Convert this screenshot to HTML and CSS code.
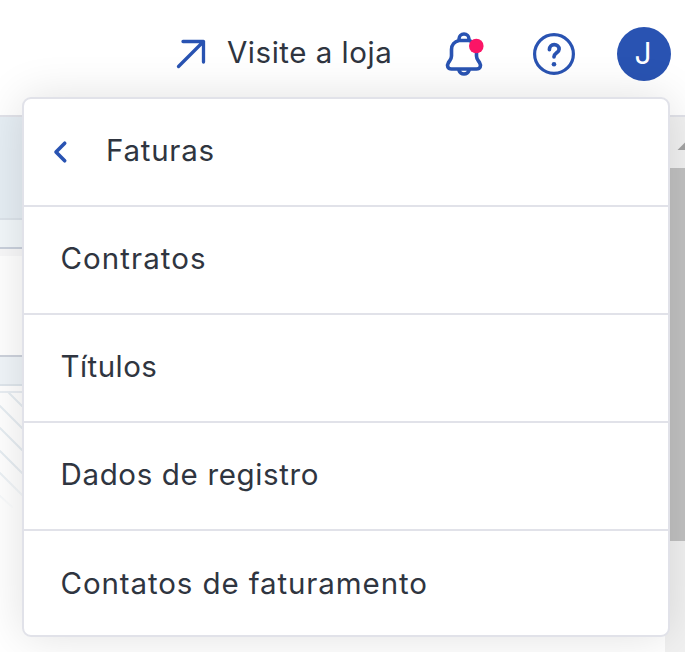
FILE: index.html
```html
<!DOCTYPE html>
<html lang="pt-BR">
<head>
<meta charset="utf-8">
<title>Faturas</title>
<link rel="stylesheet" href="styles.css">
</head>
<body>
<header class="topbar">
  <a class="store">
    <svg class="arrow" width="32" height="32" viewBox="0 0 32 32"><path d="M3.500 28.500 28.500 3.500M8 3.500h20.500v20.500"/></svg>
    <span class="store-label">Visite a loja</span>
  </a>
  <svg class="bell" width="40" height="46" viewBox="0 0 40 46">
    <path d="M15 8V7a5 5 0 0 1 10 0v1M15 38.500a5.300 5.300 0 0 0 10 0M15 8.500h10c4.500 1 7.500 4.500 7.500 9v6.500c0 3 1.500 4.200 3 6.500 2 3.400.8 6.500-3 6.500H7.500c-3.800 0-5-3.100-3-6.500 1.500-2.300 3-3.500 3-6.500v-6.500c0-4.500 3-8 7.500-9z"/>
    <circle class="dot" cx="32.300" cy="14" r="7.300"/>
  </svg>
  <svg class="help" width="42" height="42" viewBox="0 0 42 42">
    <circle cx="21" cy="21" r="19.400"/>
    <path class="mark" d="M16.400 16.600c0-3 2.100-4.900 4.800-4.900s4.900 1.900 4.900 4.500c0 3.600-5.100 3.600-5.100 7.600"/>
    <circle class="point" cx="21" cy="31.300" r="2.300"/>
  </svg>
  <div class="avatar">J</div>
</header>
<main class="page">
  <div class="content">
    <div class="band band-top"></div>
    <div class="band band-sub"></div>
    <div class="band band-gap"></div>
    <div class="band band-blank"></div>
    <div class="band band-foot"></div>
    <div class="band band-space"></div>
    <svg class="hatch" width="22" height="120" viewBox="0 0 22 120"><path d="M9 0l13 13M0 13l22 22M0 35l22 22M0 58l22 22M0 80l22 22M0 103l12 11"/></svg>
  </div>
  <div class="scrollbar">
    <svg class="up" width="20" height="51" viewBox="0 0 20 51"><path d="M12.500 33 20 25.500V33z"/></svg>
    <div class="thumb"></div>
  </div>
</main>
<nav class="menu">
  <div class="item head">
    <svg class="back" width="16" height="24" viewBox="0 0 16 24"><path d="M12.700 3.200 4 12l8.700 8.800"/></svg>
    <span class="t-faturas">Faturas</span>
  </div>
  <div class="item"><span class="t-contratos">Contratos</span></div>
  <div class="item"><span class="t-titulos">Títulos</span></div>
  <div class="item"><span class="t-dados">Dados de registro</span></div>
  <div class="item last"><span class="t-contatos">Contatos de faturamento</span></div>
</nav>
</body>
</html>
```
FILE: styles.css
```css
* { box-sizing: border-box; }
body {
  margin: 0;
  width: 685px;
  height: 652px;
  overflow: hidden;
  position: relative;
  display: flex;
  flex-direction: column;
  background: #fff;
  color: #2f3540;
  font: 29.5px/40px Inter, "Liberation Sans", sans-serif;
}
svg { display: block; flex: none; fill: none; stroke: #2953b2; stroke-linecap: round; stroke-linejoin: round; }
.topbar {
  height: 117px;
  flex: none;
  border-bottom: 2px solid #e1e2e9;
  display: flex;
  align-items: flex-start;
  padding: 27px 14px 0 175px;
}
.store { display: flex; width: 269px; padding-top: 5px; }
.store-label { margin: 0 0 0 20px; white-space: nowrap; letter-spacing: .52px; }
.arrow { stroke-width: 3.300; margin-top: 6px; }
.bell { stroke-width: 3.600; margin-top: 5px; }
.help { stroke-width: 3.200; margin: 6px 0 0 49px; }
.mark { stroke-width: 3.700; }
.dot { fill: #fb1566; stroke: none; }
.point { fill: #2953b2; stroke: none; }
.avatar {
  width: 54px;
  height: 54px;
  margin-left: auto;
  border-radius: 50%;
  background: #2953b2;
  color: #fff;
  font-size: 30px;
  line-height: 52px;
  text-align: center;
  padding-right: 2px;
}
.page { flex: 1; display: flex; }
.content { width: 665px; }
.band-top { height: 103px; background: #e6eef4; border-bottom: 2px solid #dce3ea; }
.band-sub { height: 29px; background: #f2f7fa; border-bottom: 2px solid #c9d0dc; }
.band-gap { height: 7px; background: #f8f8f9; }
.band-blank { height: 101px; border-bottom: 2px solid #cdd2dc; }
.band-foot { height: 29px; background: #f0f5f9; border-bottom: 2px solid #dfe6ec; }
.band-space { height: 7px; border-bottom: 2px solid #e9eef3; }
.hatch {
  stroke: #e6edf2;
  stroke-width: 2;
  -webkit-mask-image: linear-gradient(#000 60%, transparent);
  mask-image: linear-gradient(#000 60%, transparent);
}
.scrollbar { width: 20px; background: #f1f1f1; }
.up path { fill: #a3a3a3; stroke: none; }
.thumb { height: 373px; background: #c1c1c1; }
.menu {
  position: absolute;
  left: 22px;
  top: 97px;
  width: 648px;
  height: 540px;
  border: 2px solid #e1e2e9;
  border-radius: 9px;
  background: #fff;
  box-shadow: 0 0 46px rgba(0, 0, 0, .12);
}
.item {
  height: 108px;
  display: flex;
  align-items: center;
  padding: 0 0 4px 36.5px;
  border-bottom: 2px solid #e1e2e9;
  white-space: nowrap;
}
.head { padding-left: 28px; }
.back { stroke-width: 3.600; margin: 4px 38px 0 0; }
.last { height: 104px; border: 0; padding: 0 0 1px 36.5px; }
.t-faturas { letter-spacing: .75px; }
.t-contratos { letter-spacing: 1.06px; }
.t-titulos { letter-spacing: .45px; }
.t-dados { letter-spacing: .65px; }
.t-contatos { letter-spacing: .89px; }
```
